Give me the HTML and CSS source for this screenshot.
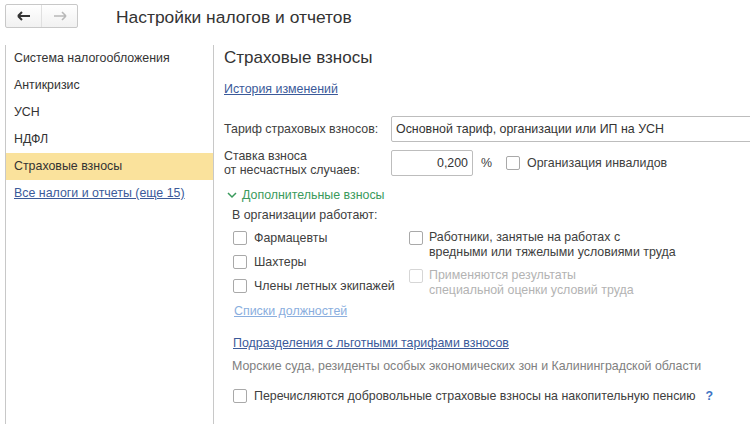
FILE: index.html
```html
<!DOCTYPE html>
<html lang="ru">
<head>
  <meta charset="UTF-8">
  <title>Настройки налогов и отчетов</title>
  <link rel="stylesheet" href="styles.css">
</head>
<body>
  <div class="topbar">
    <div class="nav-buttons">
      <span class="nav-btn">
        <svg width="14" height="10" viewBox="0 0 14 10"><path d="M1 5h12M1 5l4-4M1 5l4 4" stroke="#333" stroke-width="2" fill="none"/></svg>
      </span>
      <span class="nav-btn">
        <svg width="14" height="10" viewBox="0 0 14 10"><path d="M1 5h12M13 5l-4-4M13 5l-4 4" stroke="#b8b8b8" stroke-width="1.6" fill="none"/></svg>
      </span>
    </div>
    <h1 class="title">Настройки налогов и отчетов</h1>
  </div>

  <div class="main">
    <ul class="sidebar">
      <li>Система налогообложения</li>
      <li>Антикризис</li>
      <li>УСН</li>
      <li>НДФЛ</li>
      <li class="active">Страховые взносы</li>
      <li><a href="#">Все налоги и отчеты (еще 15)</a></li>
    </ul>

    <div class="content">
      <h2>Страховые взносы</h2>
      <a class="link history" href="#">История изменений</a>

      <div class="form-row first">
        <label class="field-label">Тариф страховых взносов:</label>
        <div class="input wide">Основной тариф, организации или ИП на УСН</div>
      </div>
      <div class="form-row">
        <label class="field-label two-line">Ставка взноса<br>от несчастных случаев:</label>
        <div class="input rate">0,200</div>
        <span class="percent">%</span>
        <span class="check"><span class="box"></span>Организация инвалидов</span>
      </div>

      <div class="group">
        <div class="group-title">
          <svg width="10" height="7" viewBox="0 0 10 7"><path d="M1 1l4 4 4-4" stroke="#3a9a5c" stroke-width="1.5" fill="none"/></svg>
          Дополнительные взносы
        </div>
        <div class="caption">В организации работают:</div>
        <div class="checks">
          <div class="col left">
            <span class="check"><span class="box"></span>Фармацевты</span>
            <span class="check"><span class="box"></span>Шахтеры</span>
            <span class="check"><span class="box"></span>Члены летных экипажей</span>
          </div>
          <div class="col right">
            <span class="check multi"><span class="box"></span><span>Работники, занятые на работах с<br>вредными или тяжелыми условиями труда</span></span>
            <span class="check multi disabled"><span class="box"></span><span>Применяются результаты<br>специальной оценки условий труда</span></span>
          </div>
        </div>
        <a class="link light" href="#">Списки должностей</a>

        <a class="link divisions" href="#">Подразделения с льготными тарифами взносов</a>
        <div class="note">Морские суда, резиденты особых экономических зон и Калининградской области</div>

        <div class="pension">
          <span class="check"><span class="box"></span>Перечисляются добровольные страховые взносы на накопительную пенсию</span>
          <span class="help">?</span>
        </div>
      </div>
    </div>
  </div>
</body>
</html>
```

FILE: styles.css
```css
body {
  font-family: "Liberation Sans", Arial, sans-serif;
  font-size: 12.4px;
  color: #404040;
  margin: 0;
  background: #fff;
  overflow: hidden;
}
a {
  color: #3b5a9a;
}
.topbar {
  height: 45px;
  display: flex;
  align-items: flex-start;
}
.nav-buttons {
  display: flex;
  margin: 4px 0 0 5px;
  border: 1px solid #c8c8c8;
  border-radius: 2px;
  background: linear-gradient(#ffffff, #f1f1f1);
}
.nav-btn {
  width: 35px;
  height: 22px;
  display: flex;
  align-items: center;
  justify-content: center;
}
.nav-btn + .nav-btn {
  border-left: 1px solid #e0e0e0;
}
.title {
  font-size: 17.4px;
  font-weight: normal;
  color: #333;
  margin: 7px 0 0 38px;
  line-height: 20px;
}
.main {
  display: flex;
  height: 380px;
}
.sidebar {
  list-style: none;
  margin: 0 0 0 5px;
  padding: 0;
  width: 207px;
  border-left: 1px solid #c8c8c8;
  border-right: 1px solid #c8c8c8;
  flex-shrink: 0;
}
.sidebar li {
  height: 27px;
  line-height: 27px;
  padding-left: 8px;
  color: #333;
}
.sidebar li.active {
  background: #fae29c;
}
.content {
  padding-left: 10px;
  flex: 1;
  min-width: 0;
}
h2 {
  font-size: 17px;
  font-weight: normal;
  color: #333;
  margin: 0;
  line-height: 26px;
}
.link {
  display: block;
  width: max-content;
  line-height: 16px;
}
.history {
  margin-top: 10px;
}
.form-row {
  display: flex;
  align-items: center;
  height: 26px;
  margin-top: 8px;
}
.form-row.first {
  margin-top: 19px;
}
.field-label {
  width: 167px;
  flex-shrink: 0;
  color: #404040;
}
.two-line {
  line-height: 14px;
}
.input {
  height: 24px;
  line-height: 24px;
  border: 1px solid #bdbdbd;
  border-radius: 2px;
  padding: 0 4px;
  color: #333;
  white-space: nowrap;
  overflow: hidden;
}
.input.wide {
  flex: 1;
  margin-right: -20px;
}
.input.rate {
  width: 72px;
  text-align: right;
}
.percent {
  margin-left: 8px;
}
.form-row .check {
  margin-left: 14px;
}
.check {
  display: flex;
  align-items: center;
  gap: 7px;
  line-height: 16px;
}
.box {
  width: 12px;
  height: 12px;
  border: 1px solid #a9a9a9;
  border-radius: 2px;
  background: #fff;
  flex-shrink: 0;
}
.group {
  padding-left: 8px;
}
.group-title {
  margin: 11px 0 0 -5px;
  color: #3a9a5c;
  line-height: 16px;
  display: flex;
  align-items: center;
  gap: 5px;
}
.caption {
  margin-top: 4px;
  line-height: 16px;
}
.checks {
  display: flex;
  margin-top: 7px;
}
.col {
  display: flex;
  flex-direction: column;
  gap: 8px;
}
.col.left {
  width: 177px;
}
.col.left .check {
  margin-left: 1px;
}
.check.multi {
  align-items: flex-start;
  line-height: 15px;
  gap: 6px;
}
.check.multi .box {
  margin-top: 1px;
}
.check.disabled {
  color: #b3b3b3;
}
.check.disabled .box {
  border-color: #d6d6d6;
}
.link.light {
  color: #8aaede;
  margin: 5px 0 0 2px;
}
.link.divisions {
  margin: 16px 0 0 1px;
}
.note {
  color: #808080;
  margin-top: 7px;
  line-height: 16px;
}
.pension {
  display: flex;
  align-items: center;
  margin: 14px 0 0 1px;
}
.help {
  color: #3d74c4;
  font-weight: bold;
  margin-left: 10px;
}
```
